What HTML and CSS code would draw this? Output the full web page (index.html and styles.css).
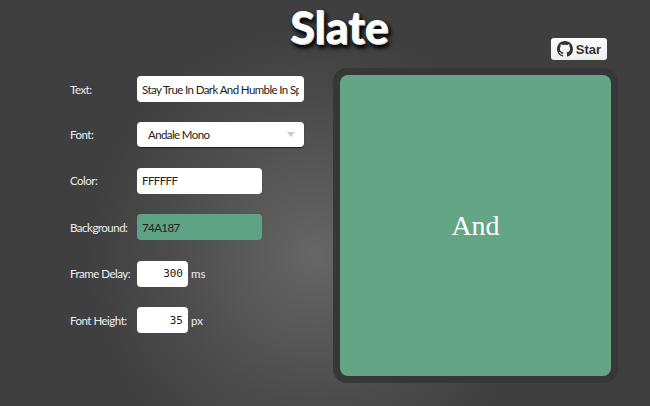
FILE: index.html
```html
<!DOCTYPE html>
<html lang="en">
<head>
  <meta charset="UTF-8" />
  <title>Slate</title>
  <link rel="stylesheet" href="styles.css">
</head>
<body>

  <!-- HEADER -->
  <div class="header">
    <h1 class="title">Slate</h1>
    <a class="star-btn">
      <svg class="star-icon" viewBox="0 0 16 16" width="16" height="16"><path d="M8 0C3.58 0 0 3.58 0 8c0 3.54 2.29 6.53 5.47 7.59.4.07.55-.17.55-.38 0-.19-.01-.82-.01-1.49-2.01.37-2.53-.49-2.69-.94-.09-.23-.48-.94-.82-1.13-.28-.15-.68-.52-.01-.53.63-.01 1.08.58 1.23.82.72 1.21 1.87.87 2.33.66.07-.52.28-.87.51-1.07-1.78-.2-3.64-.89-3.64-3.95 0-.87.31-1.59.82-2.15-.08-.2-.36-1.02.08-2.12 0 0 .67-.21 2.2.82.64-.18 1.32-.27 2-.27s1.36.09 2 .27c1.53-1.04 2.2-.82 2.2-.82.44 1.1.16 1.92.08 2.12.51.56.82 1.27.82 2.15 0 3.07-1.87 3.75-3.65 3.95.29.25.54.73.54 1.48 0 1.07-.01 1.93-.01 2.2 0 .21.15.46.55.38A8.01 8.01 0 0 0 16 8c0-4.42-3.58-8-8-8z"/></svg>
      Star
    </a>
  </div>

  <div class="main">
    <!-- FORM -->
    <div class="form">
      <div class="row">
        <label class="label">Text:</label>
        <input class="field field-text" type="text" value="Stay True In Dark And Humble In Spirit" />
      </div>
      <div class="row row-select">
        <label class="label">Font:</label>
        <div class="field field-select">Andale Mono<span class="caret"></span></div>
      </div>
      <div class="row">
        <label class="label">Color:</label>
        <input class="field field-color" type="text" value="FFFFFF" />
      </div>
      <div class="row">
        <label class="label">Background:</label>
        <input class="field field-color field-bg" type="text" value="74A187" />
      </div>
      <div class="row">
        <label class="label">Frame Delay:</label>
        <input class="field field-num" type="text" value="300" />
        <span class="unit">ms</span>
      </div>
      <div class="row">
        <label class="label">Font Height:</label>
        <input class="field field-num" type="text" value="35" />
        <span class="unit">px</span>
      </div>
    </div>

    <!-- PREVIEW -->
    <div class="frame">
      <div class="canvas">And</div>
    </div>
  </div>

</body>
</html>
```

FILE: styles.css
```css
body {
  margin: 0;
  width: 650px;
  height: 406px;
  overflow: hidden;
  font-family: "Lato", sans-serif;
  color: #fff;
  background: radial-gradient(circle 230px at 315px 255px, #666 0%, #4b4b4b 65%, #3f3f3f 100%) #3f3f3f;
}
.header {
  display: flex;
  align-items: flex-end;
  height: 60px;
  padding-bottom: 8px;
  padding-left: 290px;
  padding-right: 43px;
  justify-content: space-between;
}
.title {
  margin: 0;
  align-self: flex-start;
  font-family: "Lato", sans-serif;
  font-size: 45px;
  line-height: normal;
  font-weight: 900;
  letter-spacing: -0.2px;
  text-shadow: 1px 1px 0 #ccc, 2px 3px 4px #000, 3px 4px 5px #111;
}
.star-btn {
  display: flex;
  align-items: center;
  justify-content: center;
  gap: 3px;
  width: 56px;
  height: 22px;
  border-radius: 3px;
  background: linear-gradient(#fcfcfc, #eee);
  color: #333;
  font-family: "Liberation Sans", sans-serif;
  font-size: 13px;
  font-weight: bold;
}
.star-icon {
  fill: #333;
  flex: none;
}
.main {
  display: flex;
  justify-content: space-between;
  padding: 0 32px 0 70px;
}
.form {
  display: flex;
  flex-direction: column;
  gap: 20.6px;
  padding-top: 8px;
}
.row {
  display: flex;
  align-items: center;
  height: 26px;
}
.row-select {
  height: 24.4px;
}
.label {
  width: 67px;
  font-size: 11.5px;
  letter-spacing: -0.5px;
  color: #eee;
  white-space: nowrap;
}
.field {
  box-sizing: border-box;
  height: 26px;
  border: none;
  outline: none;
  border-radius: 4px;
  background: #fff;
  color: #222;
  font-family: "Lato", sans-serif;
  font-size: 11.5px;
  letter-spacing: -0.6px;
  padding: 0 5px;
}
.field-text {
  width: 167px;
}
.field-select {
  position: relative;
  display: flex;
  align-items: center;
  width: 167px;
  height: 25px;
  padding-left: 11px;
  box-shadow: 0 1px 1px #222;
}
.caret {
  position: absolute;
  right: 9px;
  top: 10px;
  border-left: 4px solid transparent;
  border-right: 4px solid transparent;
  border-top: 5px solid #ccc;
}
.field-color {
  width: 125px;
}
.field-bg {
  background: #5fa387;
}
.field-num {
  width: 51px;
  text-align: right;
  font-family: "DejaVu Sans Mono", monospace;
  font-size: 11px;
  letter-spacing: 0;
}
.unit {
  margin-left: 3px;
  font-size: 11.5px;
  color: #eee;
}
.frame {
  box-sizing: border-box;
  width: 285px;
  height: 315px;
  padding: 7px;
  border-radius: 14px;
  background: #373737;
}
.canvas {
  display: flex;
  align-items: center;
  justify-content: center;
  height: 100%;
  border-radius: 8px;
  background: #64a587;
  font-family: "Liberation Serif", serif;
  font-size: 28px;
}
```
